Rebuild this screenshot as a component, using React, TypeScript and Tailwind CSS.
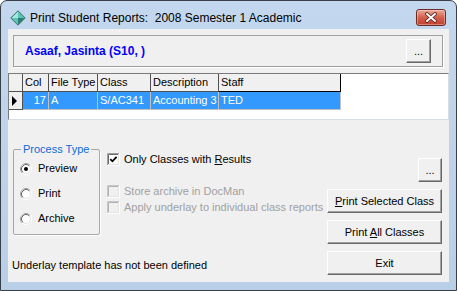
import React from "react";

function Radio({ checked }: { checked?: boolean }) {
  return (
    <svg width="12" height="12" viewBox="0 0 12 12" className="shrink-0">
      <circle cx="6" cy="6" r="4.5" fill="#fff" />
      <circle cx="6" cy="6" r="5.5" fill="none" stroke="#ffffff" strokeWidth="1" />
      <path d="M9.89 2.11 A5.5 5.5 0 0 0 2.11 9.89" fill="none" stroke="#a0a0a0" strokeWidth="1" />
      <circle cx="6" cy="6" r="4.5" fill="none" stroke="#e3e3e3" strokeWidth="1" />
      <path d="M9.18 2.82 A4.5 4.5 0 0 0 2.82 9.18" fill="none" stroke="#696969" strokeWidth="1" />
      {checked && <circle cx="6" cy="6" r="2" fill="#000" />}
    </svg>
  );
}

function Check({ checked, disabled }: { checked?: boolean; disabled?: boolean }) {
  return (
    <svg width="13" height="13" viewBox="0 0 13 13" className="shrink-0">
      <rect x="2" y="2" width="9" height="9" fill={disabled ? "#f0f0f0" : "#ffffff"} />
      <path d="M0.5 12 V0.5 H12" fill="none" stroke={disabled ? "#c8c8c8" : "#a0a0a0"} />
      <path d="M1.5 11 V1.5 H11" fill="none" stroke={disabled ? "#b0b0b0" : "#696969"} />
      <path d="M0.5 12.5 H12.5 V0.5" fill="none" stroke="#ffffff" />
      <path d="M1.5 11.5 H11.5 V1.5" fill="none" stroke="#e3e3e3" />
      {checked && (
        <path d="M3.3 6.2 L5.4 8.3 L9.6 3.9" fill="none" stroke="#000" strokeWidth="1.8" />
      )}
    </svg>
  );
}

function Btn({ children, className = "" }: { children: React.ReactNode; className?: string }) {
  return (
    <div
      className={
        "flex items-center justify-center h-[24px] bg-[#f0f0f0] border border-t-white border-l-white border-r-[#696969] border-b-[#696969] shadow-[inset_-1px_-1px_0_#a0a0a0] text-black whitespace-nowrap " +
        className
      }
    >
      {children}
    </div>
  );
}

const hdr = "bg-[#f0f0f0] border-r border-b border-[#505050] pl-[2px] flex items-center whitespace-nowrap overflow-hidden";
const cell = "bg-[#3399ff] text-white border-r border-b border-[#c0c0c0] pl-[2px] flex items-center whitespace-nowrap overflow-hidden";

export default function App() {
  return (
    <div className="w-[457px] h-[291px] bg-white font-['Liberation_Sans',Arial,sans-serif]">
      <div className="w-[457px] h-[291px] rounded-t-[7px] border border-[#3a3f47] bg-gradient-to-b from-[#c3d8ee] to-[#b9cfe8] flex flex-col overflow-hidden">
        {/* Title bar */}
        <div className="h-[28px] shrink-0 flex items-center pt-[5px] pl-[9px] pr-[10px]">
          <svg width="16" height="16" viewBox="0 0 16 16" className="shrink-0">
            <polygon points="8,0.8 15.2,8 8,15.2 0.8,8" fill="#5cc3b5" />
            <polygon points="8,1.5 1.5,8 8,8" fill="#a4e9de" />
            <polygon points="8,8 14.5,8 8,14.5" fill="#2c7e74" />
            <polygon points="8,0.8 15.2,8 8,15.2 0.8,8" fill="none" stroke="#3d6f6a" strokeWidth="1" />
          </svg>
          <div className="ml-[4px] text-[12px] text-black whitespace-pre leading-none">
            Print Student Reports:  2008 Semester 1 Academic
          </div>
          <div className="ml-auto w-[30px] h-[17px] rounded-[3px] border border-[#6e2a22] bg-gradient-to-b from-[#e9a99a] via-[#d35f4b] to-[#c2402e] flex items-center justify-center shadow-[inset_0_0_0_1px_rgba(255,255,255,0.35)]">
            <svg width="14" height="11" viewBox="0 0 14 11">
              <path d="M3 2 L11 9 M11 2 L3 9" stroke="#5a1f1a" strokeWidth="3.6" strokeLinecap="round" />
              <path d="M3 2 L11 9 M11 2 L3 9" stroke="#ffffff" strokeWidth="2" strokeLinecap="round" />
            </svg>
          </div>
        </div>

        {/* Frame + client */}
        <div className="flex-1 flex px-[7px] pb-[8px] min-h-0">
          <div className="flex-1 bg-[#f0f0f0] flex flex-col text-[11px] text-black leading-[13px] min-w-0">
            {/* Student panel */}
            <div className="ml-[5px] mr-[6px] mt-[6px] h-[32px] border border-[#a0a0a0] shadow-[1px_1px_0_#ffffff] flex items-center pl-[11px] pr-[11px]">
              <span className="font-bold text-[12px] text-[#0000ff]">Asaaf, Jasinta (S10, )</span>
              <Btn className="ml-auto w-[25px]">...</Btn>
            </div>

            {/* Grid */}
            <div className="mt-[6px] h-[47px] bg-white border border-t-[#7a7a7a] border-l-[#7a7a7a] border-r-[#d6dde6] border-b-[#d6dde6] flex flex-col">
              <div className="flex h-[18px]">
                <div className="w-[14px] bg-[#f0f0f0] border-r border-b border-[#505050]" />
                <div className={"w-[26px] " + hdr}>Col</div>
                <div className={"w-[49px] " + hdr}>File Type</div>
                <div className={"w-[53px] " + hdr}>Class</div>
                <div className={"w-[68px] " + hdr}>Description</div>
                <div className="w-[122px] bg-[#f0f0f0] border-r border-b border-black pl-[2px] flex items-center">Staff</div>
              </div>
              <div className="flex h-[18px]">
                <div className="w-[14px] bg-[#f0f0f0] border-r border-b border-[#505050] flex items-center pl-[3px]">
                  <svg width="6" height="10" viewBox="0 0 6 10">
                    <polygon points="0,0 5,5 0,10" fill="#000" />
                  </svg>
                </div>
                <div className={"w-[26px] justify-end pr-[2px] " + cell}>17</div>
                <div className={"w-[49px] " + cell}>A</div>
                <div className={"w-[53px] " + cell}>S/AC341</div>
                <div className={"w-[68px] " + cell}>Accounting 3</div>
                <div className={"w-[122px] " + cell}>TED</div>
              </div>
            </div>

            {/* Lower area */}
            <div className="flex flex-1">
              <div className="flex-1 flex flex-col pl-[5px]">
                <div className="flex">
                  <fieldset className="mt-[23px] w-[87px] h-[92px] border border-[#a8a8a8] rounded-[2px] pl-[6px] pr-[2px] shadow-[1px_1px_0_#ffffff]">
                    <legend className="ml-[1px] px-[2px] text-[#0f6ad8] whitespace-nowrap">Process Type</legend>
                    <div className="flex flex-col gap-[12px] mt-[6px]">
                      <div className="flex items-center gap-[6px] h-[13px]">
                        <Radio checked />
                        <span>Preview</span>
                      </div>
                      <div className="flex items-center gap-[6px] h-[13px]">
                        <Radio />
                        <span>Print</span>
                      </div>
                      <div className="flex items-center gap-[6px] h-[13px]">
                        <Radio />
                        <span>Archive</span>
                      </div>
                    </div>
                  </fieldset>
                  <div className="ml-[7px] mt-[33px] flex flex-col">
                    <div className="flex items-center gap-[4px] h-[13px]">
                      <Check checked />
                      <span className="whitespace-nowrap">
                        Only Classes with <u>R</u>esults
                      </span>
                    </div>
                    <div className="flex items-center gap-[4px] h-[13px] mt-[19px] text-[#a0a0a0]">
                      <Check disabled />
                      <span className="whitespace-nowrap">Store archive in DocMan</span>
                    </div>
                    <div className="flex items-center gap-[4px] h-[13px] mt-[3px] text-[#a0a0a0]">
                      <Check disabled />
                      <span className="whitespace-nowrap">Apply underlay to individual class reports</span>
                    </div>
                  </div>
                </div>
                <div className="mt-[24px] -ml-px whitespace-nowrap">Underlay template has not been defined</div>
              </div>
              <div className="w-[115px] mr-[7px] flex flex-col items-end">
                <Btn className="mt-[38px] w-[24px]">...</Btn>
                <Btn className="mt-[7px] w-[115px]">
                  <span>
                    <u>P</u>rint Selected Class
                  </span>
                </Btn>
                <Btn className="mt-[7px] w-[115px]">
                  <span>
                    Print <u>A</u>ll Classes
                  </span>
                </Btn>
                <Btn className="mt-[7px] w-[115px]">Exit</Btn>
              </div>
            </div>
          </div>
        </div>
      </div>
    </div>
  );
}
